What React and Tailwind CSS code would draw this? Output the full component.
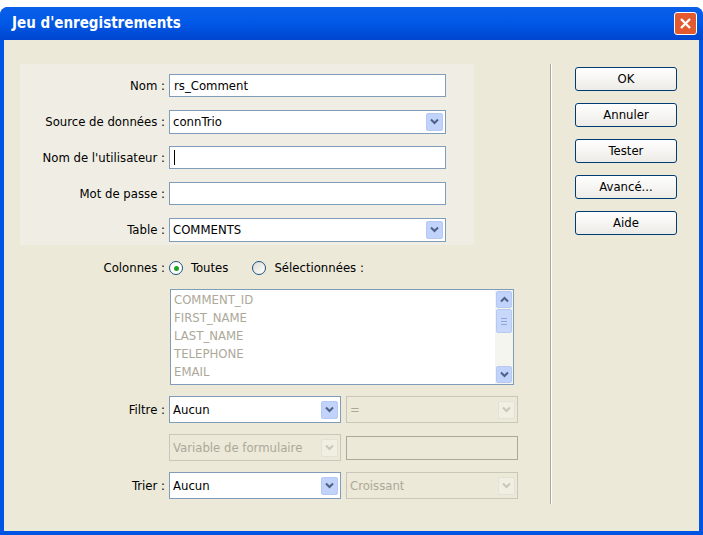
const Arrow = ({ disabled }) => (
  <div
    className={`w-[17px] h-[18px] flex items-center justify-center rounded-[2px] ${
      disabled ? "bg-[#f1efe2] border border-[#e4e2d6]" : "bg-[#c1d3fb] border border-[#b6c9f4]"
    }`}
  >
    <svg width="9" height="7" viewBox="0 0 9 7">
      <path d="M1 1.5 L4.5 5 L8 1.5" fill="none" stroke={disabled ? "#c9c7ba" : "#4d6185"} strokeWidth="2" />
    </svg>
  </div>
);

const Select = ({ value, w, disabled, h = "h-[24px]" }) => (
  <div
    className={`${w} ${h} flex items-center justify-between pl-[3px] pr-[2px] border ${
      disabled ? "border-[#c9c7ba] bg-[#ece9d8] text-[#aca899]" : "border-[#7f9db9] bg-white text-black"
    }`}
  >
    <span className="truncate">{value}</span>
    <Arrow disabled={disabled} />
  </div>
);

const Input = ({ value, cursor }) => (
  <div className="w-[277px] h-[23px] border border-[#7f9db9] bg-white flex items-center px-[4px]">
    {value}
    {cursor && <span className="w-px h-[15px] bg-black" />}
  </div>
);

const Row = ({ label, children }) => (
  <div className="flex items-center h-[23px]">
    <div className="w-[149px] text-right pr-[4px]">{label}</div>
    {children}
  </div>
);

const Btn = ({ children }) => (
  <div className="w-[102px] h-[24px] rounded-[3px] border border-[#003c74] bg-gradient-to-b from-white to-[#ecebe6] flex items-center justify-center">
    {children}
  </div>
);

export default function App() {
  return (
    <div
      className="w-[703px] h-[535px] bg-white pt-[7px] text-[13px] text-black"
      style={{ fontFamily: "Tahoma, 'DejaVu Sans Condensed', 'Liberation Sans', sans-serif" }}
    >
      <div className="h-[528px] flex flex-col rounded-t-[8px] overflow-hidden bg-[#0054e3]">
        <div className="h-[33px] flex items-center justify-between pl-[12px] pr-[6px] bg-gradient-to-b from-[#0a5fe8] via-[#0058e6] to-[#0045cf]">
          <span className="text-white font-bold text-[15px]">Jeu d'enregistrements</span>
          <div className="w-[23px] h-[23px] rounded-[3px] border border-white bg-[#e35a2f] flex items-center justify-center">
            <svg width="13" height="13" viewBox="0 0 13 13">
              <path d="M2 2 L11 11 M11 2 L2 11" stroke="white" strokeWidth="2.4" />
            </svg>
          </div>
        </div>
        <div className="flex-1 mx-[4px] mb-[4px] bg-[#ece9d8] flex pt-[24px]">
          <div className="w-[546px] pl-[16px] flex flex-col">
            <div className="w-[454px] bg-[#f0eee4] pt-[10px] pb-[4px] flex flex-col gap-[13px]">
              <Row label="Nom :"><Input value="rs_Comment" /></Row>
              <Row label="Source de données :"><Select value="connTrio" w="w-[277px]" /></Row>
              <Row label="Nom de l'utilisateur :"><Input cursor /></Row>
              <Row label="Mot de passe :"><Input /></Row>
              <Row label="Table :"><Select value="COMMENTS" w="w-[277px]" /></Row>
            </div>
            <div className="flex items-center mt-[12px] h-[22px]">
              <div className="w-[149px] text-right pr-[4px]">Colonnes :</div>
              <div className="w-[14px] h-[14px] rounded-full border border-[#1c5180] bg-white flex items-center justify-center">
                <div className="w-[5px] h-[5px] rounded-full bg-[#21a121]" />
              </div>
              <span className="ml-[8px]">Toutes</span>
              <div className="ml-[24px] w-[14px] h-[14px] rounded-full border border-[#1c5180] bg-gradient-to-br from-[#dcdcd4] to-white" />
              <span className="ml-[8px]">Sélectionnées :</span>
            </div>
            <div className="ml-[150px] mt-[10px] w-[344px] h-[96px] border border-[#7f9db9] bg-white flex">
              <div className="flex-1 pl-[3px] pt-[1px] text-[#aca899] leading-[18px]">
                <div>COMMENT_ID</div>
                <div>FIRST_NAME</div>
                <div>LAST_NAME</div>
                <div>TELEPHONE</div>
                <div>EMAIL</div>
              </div>
              <div className="w-[18px] bg-[#f5f5f0] flex flex-col items-center justify-between py-[1px]">
                <div className="w-[16px] h-[17px] rounded-[2px] bg-[#c1d3fb] border border-[#b6c9f4] flex items-center justify-center">
                  <svg width="9" height="7" viewBox="0 0 9 7"><path d="M1 5.5 L4.5 2 L8 5.5" fill="none" stroke="#4d6185" strokeWidth="2" /></svg>
                </div>
                <div className="w-[16px] h-[24px] -mt-[32px] rounded-[2px] bg-[#c8d8fb] border border-[#b6c9f4] flex flex-col items-center justify-center gap-[2px]">
                  <div className="w-[6px] h-px bg-[#8ea6dc]" /><div className="w-[6px] h-px bg-[#8ea6dc]" /><div className="w-[6px] h-px bg-[#8ea6dc]" />
                </div>
                <div className="w-[16px] h-[17px] rounded-[2px] bg-[#c1d3fb] border border-[#b6c9f4] flex items-center justify-center">
                  <svg width="9" height="7" viewBox="0 0 9 7"><path d="M1 1.5 L4.5 5 L8 1.5" fill="none" stroke="#4d6185" strokeWidth="2" /></svg>
                </div>
              </div>
            </div>
            <div className="flex flex-col gap-[11px] mt-[11px]">
              <div className="flex items-center">
                <div className="w-[149px] text-right pr-[4px]">Filtre :</div>
                <Select value="Aucun" w="w-[172px]" h="h-[27px]" />
                <div className="ml-[5px]"><Select value="=" w="w-[172px]" h="h-[27px]" disabled /></div>
              </div>
              <div className="flex items-center ml-[149px]">
                <Select value="Variable de formulaire" w="w-[172px]" h="h-[27px]" disabled />
                <div className="ml-[5px] w-[172px] h-[24px] border border-[#aca899] bg-[#ece9d8]" />
              </div>
              <div className="flex items-center">
                <div className="w-[149px] text-right pr-[4px]">Trier :</div>
                <Select value="Aucun" w="w-[172px]" h="h-[27px]" />
                <div className="ml-[5px]"><Select value="Croissant" w="w-[172px]" h="h-[27px]" disabled /></div>
              </div>
            </div>
          </div>
          <div className="w-[2px] h-[440px] border-l border-[#aca899] border-r border-r-white" />
          <div className="ml-[23px] pt-[3px] flex flex-col gap-[12px]">
            <Btn>OK</Btn>
            <Btn>Annuler</Btn>
            <Btn>Tester</Btn>
            <Btn>Avancé...</Btn>
            <Btn>Aide</Btn>
          </div>
        </div>
      </div>
    </div>
  );
}
